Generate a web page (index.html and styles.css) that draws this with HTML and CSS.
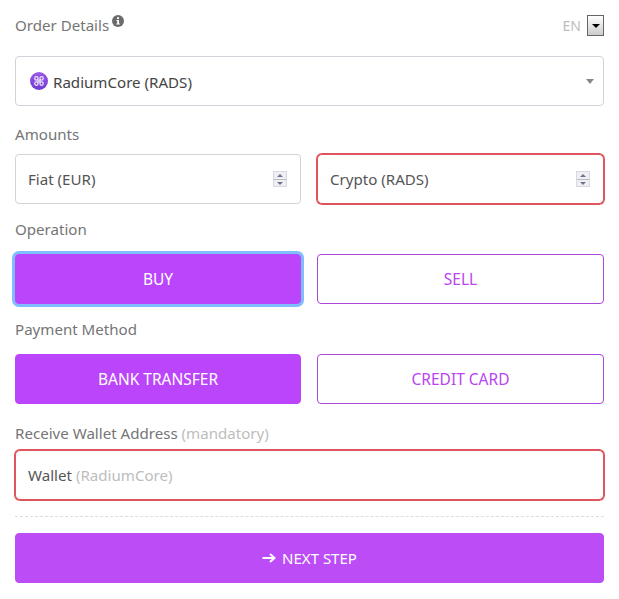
FILE: index.html
```html
<!DOCTYPE html>
<html lang="en">
<head>
  <meta charset="UTF-8">
  <meta name="viewport" content="width=device-width, initial-scale=1.0">
  <title>Order Details</title>
  <link rel="stylesheet" href="styles.css">
</head>
<body>
  <form class="order-form">
    <div class="order-head">
      <div class="order-title">
        <span>Order Details</span>
        <svg class="info-icon" width="12" height="12" viewBox="0 0 12 12">
          <circle cx="6" cy="6" r="6" fill="#6b6b6b"/>
          <rect x="5" y="2.2" width="2" height="1.8" fill="#fff"/>
          <path d="M4.4 5h2.6v3.6h.8v1H4.4v-1h.8V6h-.8z" fill="#fff"/>
        </svg>
      </div>
      <div class="lang">
        <span>EN</span>
        <span class="lang-arrow"></span>
      </div>
    </div>

    <div class="field coin-select">
      <svg class="coin-icon" width="18" height="18" viewBox="0 0 18 18">
        <defs>
          <linearGradient id="coin-fill" x1="0" y1="0" x2="0" y2="1">
            <stop offset="0" stop-color="#9a5ae8"/>
            <stop offset="1" stop-color="#6f3bd0"/>
          </linearGradient>
        </defs>
        <circle cx="9" cy="9" r="9" fill="url(#coin-fill)"/>
        <g fill="none" stroke="#efe6fc" stroke-width="1.2">
          <circle cx="6.4" cy="6.4" r="1.7"/>
          <circle cx="11.6" cy="6.4" r="1.7"/>
          <circle cx="6.4" cy="11.6" r="1.7"/>
          <circle cx="11.6" cy="11.6" r="1.7"/>
          <path d="M8 8h2v2H8z"/>
        </g>
      </svg>
      <span class="coin-name">RadiumCore (RADS)</span>
      <span class="select-caret"></span>
    </div>

    <div class="label label-amounts">Amounts</div>
    <div class="row">
      <div class="field amount">
        <span>Fiat (EUR)</span>
        <span class="spinner"><i class="up"></i><i class="down"></i></span>
      </div>
      <div class="field amount invalid">
        <span>Crypto (RADS)</span>
        <span class="spinner"><i class="up"></i><i class="down"></i></span>
      </div>
    </div>

    <div class="label">Operation</div>
    <div class="row">
      <button type="button" class="btn btn-solid btn-focus">BUY</button>
      <button type="button" class="btn btn-outline">SELL</button>
    </div>

    <div class="label">Payment Method</div>
    <div class="row">
      <button type="button" class="btn btn-solid">BANK TRANSFER</button>
      <button type="button" class="btn btn-outline">CREDIT CARD</button>
    </div>

    <div class="label label-wallet">Receive Wallet Address <span class="muted">(mandatory)</span></div>
    <div class="field wallet invalid">
      <span>Wallet&nbsp;<span class="muted">(RadiumCore)</span></span>
    </div>

    <hr class="divider">

    <button type="button" class="btn btn-solid btn-next">
      <svg class="next-arrow" width="14" height="12" viewBox="0 0 14 12">
        <path d="M0.5 6H12M8 2L12.5 6L8 10" fill="none" stroke="#fff" stroke-width="2"/>
      </svg>
      NEXT STEP
    </button>
  </form>
</body>
</html>
```

FILE: styles.css
```css
* { margin: 0; padding: 0; box-sizing: border-box; font-family: 'Noto Sans', 'Open Sans', sans-serif; }
body {
  background: #fff;
  color: #495057;
  font-size: 15.1px;
}

.order-form { padding: 14px 15px 16px; }

.order-head {
  display: flex;
  justify-content: space-between;
  align-items: flex-start;
  height: 42px;
}
.order-title { display: flex; align-items: flex-start; gap: 3px; color: #757575; line-height: 22px; }
.info-icon { margin-top: 1px; }

.lang { display: flex; align-items: center; gap: 6px; color: #bdbdbd; font-size: 14px; padding-top: 1px; }
.lang-arrow {
  width: 17px;
  height: 21px;
  border: 1px solid #666;
  background: linear-gradient(#fff, #ccc);
  position: relative;
}
.lang-arrow::after {
  content: '';
  position: absolute;
  left: 4px;
  top: 8px;
  border: 4px solid transparent;
  border-top: 4px solid #000;
  border-bottom: 0;
}

.field {
  display: flex;
  align-items: center;
  height: 50px;
  background: #fff;
  border: 1px solid #ced4da;
  border-radius: 4px;
}
.field.invalid { border-color: #e0555b; box-shadow: 0 0 0 1px #e0555b; border-radius: 5px; }

.coin-select { padding: 0 9px 0 14px; }
.coin-icon { flex: none; margin-right: 5px; }
.coin-name { flex: 1; color: #444; padding-top: 1px; }
.select-caret {
  border: 4px solid transparent;
  border-top: 5px solid #888;
  border-bottom: 0;
}

.label { color: #757575; height: 20px; line-height: 20px; margin-top: 15px; margin-bottom: 15px; }
.label-amounts { margin-top: 18px; margin-bottom: 10px; }
.label-wallet { margin-top: 19px; margin-bottom: 7px; }
.muted { color: #bdbdbd; }

.row { display: grid; grid-template-columns: 286px 287px; gap: 16px; }

.amount { justify-content: space-between; padding: 0 13px 0 12px; color: #555; }
.spinner {
  display: flex;
  flex-direction: column;
  width: 14px;
  height: 16px;
  border: 1px solid #d8d8e0;
  background: #f0f0f4;
}
.spinner i { flex: 1; position: relative; display: block; }
.spinner .up { border-bottom: 1px solid #bbb; }
.spinner i::after {
  content: '';
  position: absolute;
  left: 3px;
  top: 2px;
  border: 3px solid transparent;
  border-top: 0;
  border-bottom: 3px solid #6a7390;
}
.spinner .down::after {
  border-bottom: 0;
  border-top: 3px solid #6a7390;
}

.wallet { padding: 0 12px; }
.wallet span { color: #555; }
.wallet .muted { color: #bdbdbd; }

.btn {
  height: 50px;
  border-radius: 4px;
  font-size: 15.5px;
  cursor: pointer;
}
.btn-solid { background: #bb45fb; border: 1px solid #bb45fb; color: #fff; }
.btn-outline { background: #fff; border: 1px solid #ab47d6; color: #b845f0; }
.btn-focus { box-shadow: 0 0 0 3px #80bdff; }

.divider { border: 0; border-top: 1px dashed #ddd; margin: 16px 0; }

.btn-next { display: flex; align-items: center; justify-content: center; gap: 6px; width: 100%; font-size: 15px; background: #bb4cf6; border-color: #bb4cf6; }
```
